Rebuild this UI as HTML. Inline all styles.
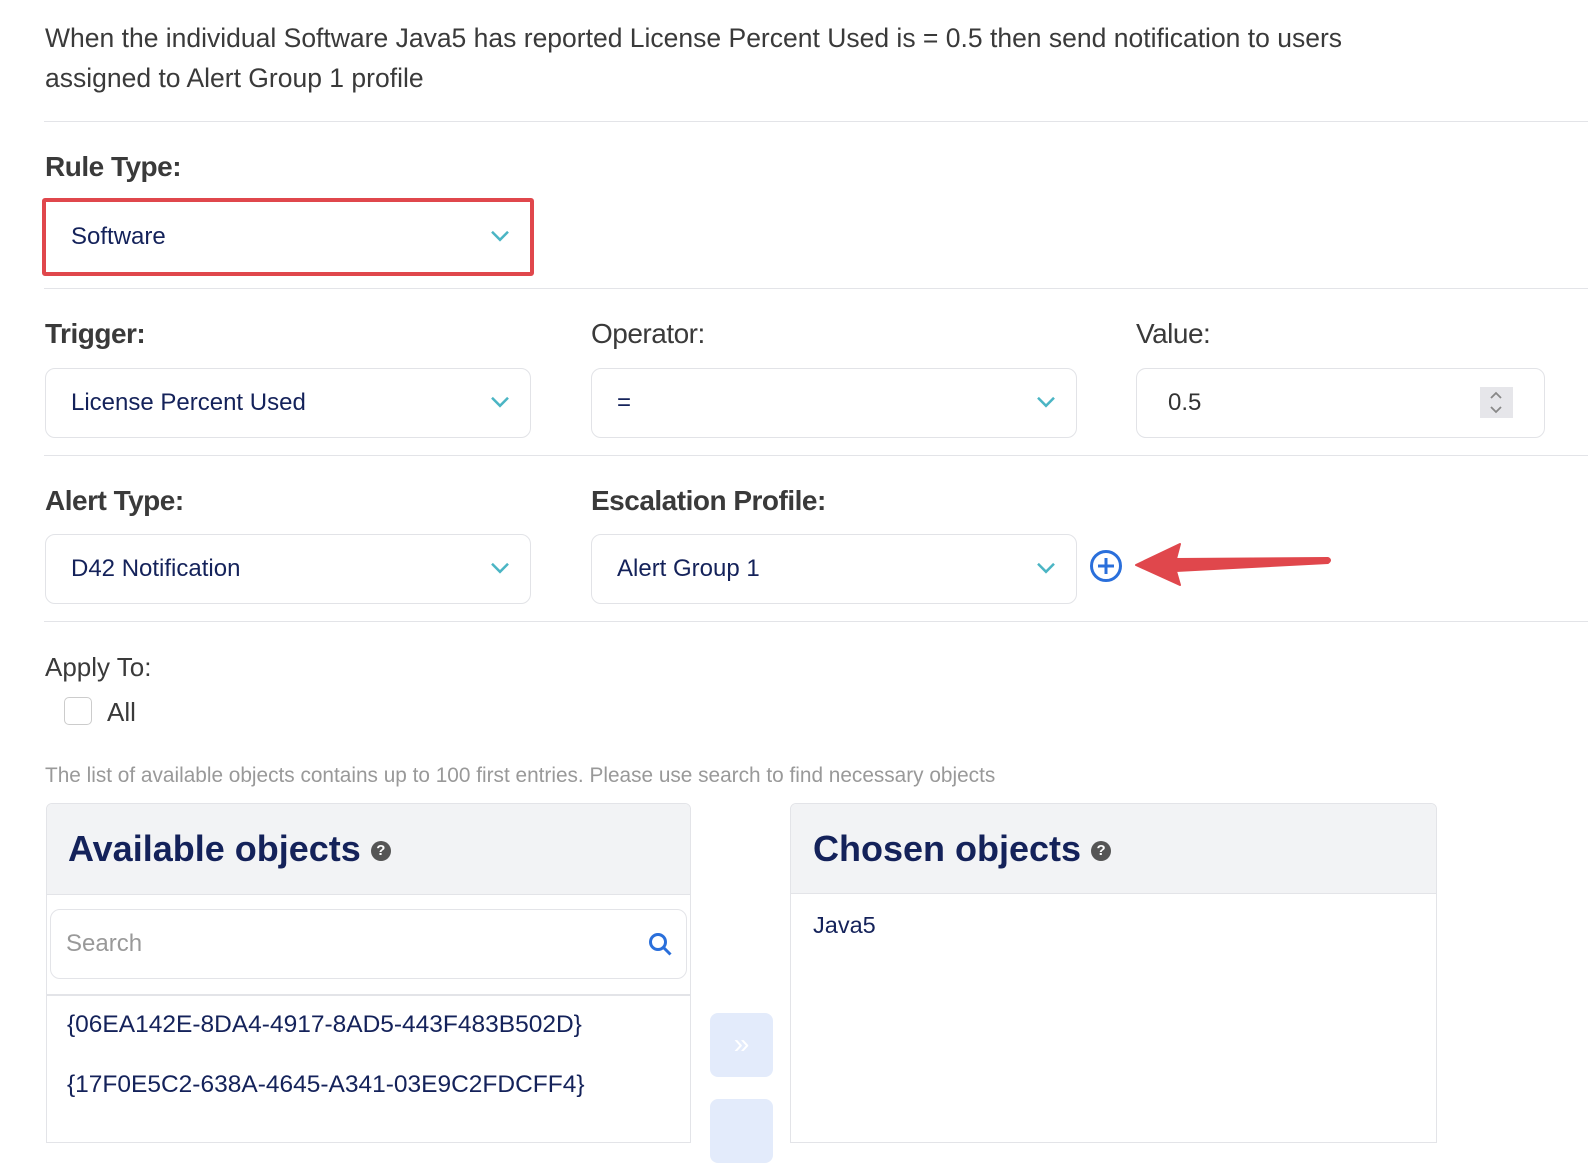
<!DOCTYPE html>
<html><head><meta charset="utf-8"><style>
*{box-sizing:border-box;margin:0;padding:0}
body{width:1588px;height:1136px;overflow:hidden;background:#fff;font-family:"Liberation Sans",sans-serif;position:relative;color:#333}
.a{position:absolute}
.hr{position:absolute;left:44px;right:0;height:1px;background:#e3e4e8}
.lbl{position:absolute;font-size:28px;font-weight:bold;color:#3a3a3a;letter-spacing:-0.5px}
.box{position:absolute;border:1.5px solid #e2e3e7;border-radius:10px;background:#fff;font-size:24px;color:#14225a}
.box span{position:absolute;left:25px;top:50%;transform:translateY(-50%)}
.chev{position:absolute;right:20px;top:50%;transform:translateY(-60%);}
.item{position:absolute;left:67px;font-size:24.5px;color:#14225a}
</style></head><body>
<div class="a" style="left:45px;top:18px;font-size:26.5px;line-height:40px;color:#3a3a3a;width:1385px">When the individual Software Java5 has reported License Percent Used is = 0.5 then send notification to users assigned to Alert Group 1 profile</div>
<div class="hr" style="top:121px"></div>
<div class="lbl" style="left:45px;top:151px">Rule Type:</div>
<div class="box" style="left:42px;top:198px;width:492px;height:78px;border:4px solid #e0474c;border-radius:3px"><span>Software</span><svg class="chev" width="20" height="12" viewBox="0 0 20 12"><path d="M2 2l8 8 8-8" fill="none" stroke="#4bb5c4" stroke-width="2.5"/></svg></div>
<div class="hr" style="top:288px"></div>
<div class="lbl" style="left:45px;top:318px">Trigger:</div>
<div class="lbl" style="left:591px;top:318px;font-weight:normal">Operator:</div>
<div class="lbl" style="left:1136px;top:318px;font-weight:normal">Value:</div>
<div class="box" style="left:45px;top:368px;width:486px;height:70px"><span>License Percent Used</span><svg class="chev" width="20" height="12" viewBox="0 0 20 12"><path d="M2 2l8 8 8-8" fill="none" stroke="#4bb5c4" stroke-width="2.5"/></svg></div>
<div class="box" style="left:591px;top:368px;width:486px;height:70px"><span>=</span><svg class="chev" width="20" height="12" viewBox="0 0 20 12"><path d="M2 2l8 8 8-8" fill="none" stroke="#4bb5c4" stroke-width="2.5"/></svg></div>
<div class="box" style="left:1136px;top:368px;width:409px;height:70px;color:#333"><span style="left:31px">0.5</span><div class="a" style="left:343px;top:18px;width:33px;height:31px;background:#e6e6ea"><svg width="33" height="31" viewBox="0 0 33 31"><path d="M11 11l5-5 5 5M11 20l5 5 5-5" fill="none" stroke="#888" stroke-width="1.8"/></svg></div></div>
<div class="hr" style="top:455px"></div>
<div class="lbl" style="left:45px;top:485px">Alert Type:</div>
<div class="lbl" style="left:591px;top:485px">Escalation Profile:</div>
<div class="box" style="left:45px;top:534px;width:486px;height:70px"><span>D42 Notification</span><svg class="chev" width="20" height="12" viewBox="0 0 20 12"><path d="M2 2l8 8 8-8" fill="none" stroke="#4bb5c4" stroke-width="2.5"/></svg></div>
<div class="box" style="left:591px;top:534px;width:486px;height:70px"><span>Alert Group 1</span><svg class="chev" width="20" height="12" viewBox="0 0 20 12"><path d="M2 2l8 8 8-8" fill="none" stroke="#4bb5c4" stroke-width="2.5"/></svg></div>
<svg class="a" style="left:1088px;top:548px" width="36" height="36" viewBox="0 0 36 36"><circle cx="18" cy="18" r="14.5" fill="none" stroke="#2a6fdb" stroke-width="3"/><path d="M18 10v16M10 18h16" stroke="#2a6fdb" stroke-width="3"/></svg>
<svg class="a" style="left:1130px;top:540px" width="205" height="50" viewBox="0 0 205 50"><path d="M6 25L50 4 46 19 198 18Q202 20 198 23L46 31 50 45Z" fill="#e0474c" stroke="#e0474c" stroke-width="2" stroke-linejoin="round"/></svg>
<div class="hr" style="top:621px"></div>
<div class="a" style="left:45px;top:652px;font-size:26px;color:#3a3a3a">Apply To:</div>
<div class="a" style="left:64px;top:697px;width:28px;height:28px;border:1.5px solid #ccc;border-radius:5px"></div>
<div class="a" style="left:107px;top:697px;font-size:26px;color:#3a3a3a">All</div>
<div class="a" style="left:45px;top:764px;font-size:20.8px;color:#999">The list of available objects contains up to 100 first entries. Please use search to find necessary objects</div>
<div class="a" style="left:46px;top:803px;width:645px;height:340px;border:1.5px solid #e3e4e8;border-radius:6px 6px 0 0;overflow:hidden">
<div style="height:91px;background:#f2f3f5;border-bottom:1.5px solid #e3e4e8;padding:24px 0 0 21px;font-size:36px;font-weight:bold;color:#14225a">Available objects <span style="display:inline-block;width:20px;height:20px;border-radius:50%;background:#555;color:#fff;font-size:15px;text-align:center;line-height:20px;vertical-align:middle">?</span></div>
<div class="a" style="left:3px;top:105px;width:637px;height:70px;border:1.5px solid #e3e4e8;border-radius:10px;font-size:24px;color:#999;padding:20px 15px">Search<svg class="a" style="right:12px;top:22px" width="26" height="26" viewBox="0 0 26 26"><circle cx="10" cy="10" r="7.5" fill="none" stroke="#2a6fdb" stroke-width="3"/><path d="M15.5 15.5l7 7" stroke="#2a6fdb" stroke-width="3"/></svg></div>
<div class="a" style="left:0;right:0;top:190px;height:2px;background:#e3e4e8"></div>
</div>
<div class="item" style="top:1011px">{06EA142E-8DA4-4917-8AD5-443F483B502D}</div>
<div class="item" style="top:1071px">{17F0E5C2-638A-4645-A341-03E9C2FDCFF4}</div>
<div class="a" style="left:710px;top:1013px;width:63px;height:64px;background:#e3ebfb;border-radius:8px;color:#fff;font-size:28px;text-align:center;line-height:62px">»</div>
<div class="a" style="left:710px;top:1099px;width:63px;height:64px;background:#e3ebfb;border-radius:8px"></div>
<div class="a" style="left:790px;top:803px;width:647px;height:340px;border:1.5px solid #e3e4e8;border-radius:6px 6px 0 0;overflow:hidden">
<div style="height:90px;background:#f2f3f5;border-bottom:1.5px solid #e3e4e8;padding:24px 0 0 22px;font-size:36px;font-weight:bold;color:#14225a">Chosen objects <span style="display:inline-block;width:20px;height:20px;border-radius:50%;background:#555;color:#fff;font-size:15px;text-align:center;line-height:20px;vertical-align:middle">?</span></div>
<div style="padding:18px 0 0 22px;font-size:23.5px;color:#14225a">Java5</div>
</div>
</body></html>
